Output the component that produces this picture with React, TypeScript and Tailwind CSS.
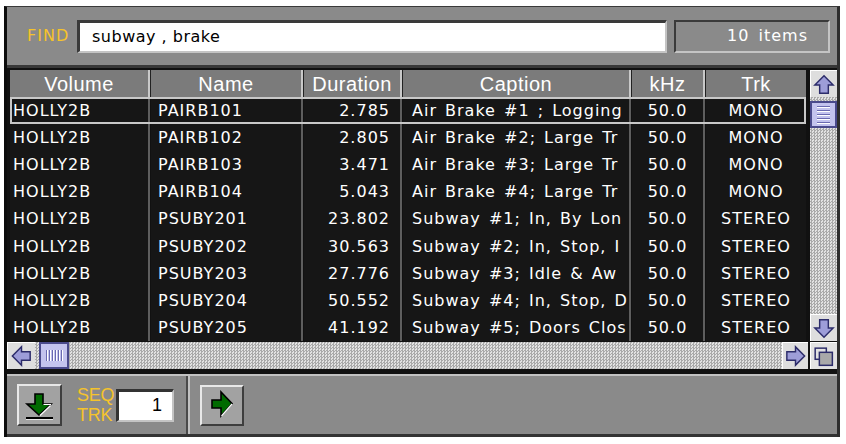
import React from "react";

type Row = [string, string, string, string, string, string];

const rows: Row[] = [
  ["HOLLY2B", "PAIRB101", "2.785", "Air Brake #1 ; Logging", "50.0", "MONO"],
  ["HOLLY2B", "PAIRB102", "2.805", "Air Brake #2; Large Tr", "50.0", "MONO"],
  ["HOLLY2B", "PAIRB103", "3.471", "Air Brake #3; Large Tr", "50.0", "MONO"],
  ["HOLLY2B", "PAIRB104", "5.043", "Air Brake #4; Large Tr", "50.0", "MONO"],
  ["HOLLY2B", "PSUBY201", "23.802", "Subway #1; In, By Lon", "50.0", "STEREO"],
  ["HOLLY2B", "PSUBY202", "30.563", "Subway #2; In, Stop, I", "50.0", "STEREO"],
  ["HOLLY2B", "PSUBY203", "27.776", "Subway #3; Idle & Aw", "50.0", "STEREO"],
  ["HOLLY2B", "PSUBY204", "50.552", "Subway #4; In, Stop, D", "50.0", "STEREO"],
  ["HOLLY2B", "PSUBY205", "41.192", "Subway #5; Doors Clos", "50.0", "STEREO"],
];

const NAVY = "#2c2c6a";
const LAV = "#9d9dd8";

function ArrowUp() {
  return (
    <svg width="27" height="27" viewBox="0 0 27 27">
      <polygon points="13.5,4.5 23,14 18,14 18,22.5 9,22.5 9,14 4,14" fill={LAV} stroke={NAVY} strokeWidth="1.5" />
    </svg>
  );
}

function ArrowDown() {
  return (
    <svg width="27" height="27" viewBox="0 0 27 27">
      <polygon points="13.5,22.5 23,13 18,13 18,4.5 9,4.5 9,13 4,13" fill={LAV} stroke={NAVY} strokeWidth="1.5" />
    </svg>
  );
}

function ArrowLeft() {
  return (
    <svg width="28" height="26" viewBox="0 0 28 26">
      <polygon points="4.5,13 14,3.5 14,8.5 23,8.5 23,17.5 14,17.5 14,22.5" fill={LAV} stroke={NAVY} strokeWidth="1.5" />
    </svg>
  );
}

function ArrowRight() {
  return (
    <svg width="26" height="26" viewBox="0 0 26 26">
      <polygon points="22.5,13 13,3.5 13,8.5 4,8.5 4,17.5 13,17.5 13,22.5" fill={LAV} stroke={NAVY} strokeWidth="1.5" />
    </svg>
  );
}

function GrowBox() {
  return (
    <svg width="28" height="27" viewBox="0 0 28 27">
      <rect x="4.5" y="4.5" width="12" height="12" fill="none" stroke={NAVY} strokeWidth="1.6" />
      <rect x="9" y="9" width="14" height="14" fill="#a9a9a9" stroke={NAVY} strokeWidth="1.6" />
    </svg>
  );
}

function GreenDown() {
  return (
    <svg width="41" height="38" viewBox="0 0 41 38">
      <polygon points="16,8 24,8 24,18 32,18 20,29 8,18 16,18" fill="#006b00" stroke="#000" strokeWidth="1.6" />
      <line x1="24.5" y1="18.5" x2="32" y2="18.5" stroke="#fff" strokeWidth="1" />
      <line x1="31.5" y1="19.5" x2="21" y2="29.5" stroke="#fff" strokeWidth="1.2" />
      <rect x="7" y="31" width="27" height="2" fill="#000" />
      <rect x="7" y="33" width="27" height="1" fill="#e8e8e8" />
    </svg>
  );
}

function GreenRight() {
  return (
    <svg width="40" height="37" viewBox="0 0 40 37">
      <polygon points="10,13 19,13 19,5 30,16.5 19,29 19,21 10,21" fill="#006b00" stroke="#000" strokeWidth="1.6" />
      <line x1="30" y1="17" x2="19.5" y2="29" stroke="#fff" strokeWidth="1.2" />
    </svg>
  );
}

// widths include the 3px column rule on the right
const cols = [
  { w: "w-[141px]", head: "Volume", body: "pl-[3px] justify-start" },
  { w: "w-[153px]", head: "Name", body: "pl-[7px] justify-start" },
  { w: "w-[99px]", head: "Duration", body: "pr-[10px] justify-end" },
  { w: "w-[229px]", head: "Caption", body: "pl-[9px] justify-start" },
  { w: "w-[74px]", head: "kHz", body: "justify-center" },
  { w: "w-[100px]", head: "Trk", body: "justify-center" },
];

const checker =
  "bg-[repeating-conic-gradient(#a9a9a9_0%_25%,#e2e2e2_0%_50%)] bg-[length:3px_3px]";

export default function App() {
  return (
    <div className="w-[846px] h-[444px] bg-white pt-[6px] pl-[4px] font-['DejaVu_Sans',sans-serif] overflow-hidden">
      <div className="w-[836px] h-[431px] border-l-[3px] border-l-[#0c0c0c] border-r-[3px] border-r-[#2e2e2e] border-t border-t-[#3a3a3a] flex flex-col bg-[#8a8a8a]">
        {/* search bar */}
        <div className="h-[58px] flex items-center pl-[20px] shrink-0">
          <span className="text-[16px] text-[#f5c32b] tracking-[1px] w-[50px] leading-none">FIND</span>
          <div className="w-[590px] h-[33px] bg-white border-t-[3px] border-l-[3px] border-[#3a3a3a] border-b-2 border-r-2 border-b-[#c4c4c4] border-r-[#c4c4c4] flex items-center pl-[12px] text-[16px] tracking-[0.5px] text-black">
            subway , brake
          </div>
          <div className="ml-[7px] w-[156px] h-[33px] border-t-2 border-l-2 border-[#3a3a3a] border-b-2 border-r-2 border-b-[#c4c4c4] border-r-[#c4c4c4] flex items-center justify-end pr-[20px] text-[16px] tracking-[1px] [word-spacing:3px] text-white">
            10 items
          </div>
        </div>
        <div className="h-[3px] bg-[#383838] shrink-0" />

        {/* list */}
        <div className="bg-[#111] shrink-0 flex flex-col pt-[2px]">
          <div className="flex h-[271px]">
            <div className="pl-[3px] w-[799px] flex flex-col">
              <div className="flex h-[27px] shrink-0">
                {cols.map((c, i) => (
                  <div key={c.head} className={`${c.w} flex h-full`}>
                    <div
                      className={`flex-1 bg-[#7b7b7b] flex items-center justify-center text-white text-[20px] tracking-[0.5px] font-['Liberation_Sans',sans-serif] leading-none ${i < 5 ? "border-r-2 border-r-[#c9c9c9]" : ""}`}
                    >
                      {c.head}
                    </div>
                    {i < 5 && <div className="w-px bg-[#222]" />}
                  </div>
                ))}
              </div>
              {rows.map((r, ri) => (
                <div key={ri} className="relative flex h-[27.1px] shrink-0">
                  {r.map((v, ci) => (
                    <div key={ci} className={`${cols[ci].w} flex h-full`}>
                      <div
                        className={`flex-1 min-w-0 overflow-hidden whitespace-nowrap flex items-center pt-[1px] ${cols[ci].body} text-white text-[16px] tracking-[1px] [word-spacing:2px] leading-none bg-[#161616] ${ci < 5 ? "border-r-2 border-r-[#5e5e5e]" : ""}`}
                      >
                        {v}
                      </div>
                      {ci < 5 && <div className="w-px bg-[#111]" />}
                    </div>
                  ))}
                  {ri === 0 && (
                    <div className="absolute inset-0 border-2 border-[#c8c8c8] pointer-events-none" />
                  )}
                </div>
              ))}
            </div>

            {/* vertical scroll bar */}
            <div className="ml-[4px] w-[27px] flex flex-col">
              <div className="h-[27px] bg-[#dedede] border-t border-l border-white flex items-center justify-center">
                <ArrowUp />
              </div>
              <div className={`flex-1 flex flex-col pt-[4px] ${checker}`}>
                <div className="h-[27px] bg-[#c3c3ee] border-2 border-[#4a4a8c] flex flex-col items-center justify-center gap-[2px]">
                  {[0, 1, 2, 3, 4].map((k) => (
                    <div key={k} className="w-[13px] h-[2px] bg-[#6a6ab0] border-b border-white" />
                  ))}
                </div>
              </div>
              <div className="h-[27px] bg-[#dedede] border-t border-l border-white flex items-center justify-center">
                <ArrowDown />
              </div>
            </div>
          </div>

          {/* horizontal scroll bar */}
          <div className="flex h-[27px] mt-[1px]">
            <div className="w-[801px] flex">
              <div className="w-[28px] bg-[#dedede] border-t border-l border-white flex items-center justify-center">
                <ArrowLeft />
              </div>
              <div className={`flex-1 flex pl-[4px] ${checker}`}>
                <div className="w-[30px] bg-[#c3c3ee] border-2 border-[#4a4a8c] flex items-center justify-center gap-[1px]">
                  {[0, 1, 2, 3, 4, 5].map((k) => (
                    <div key={k} className="w-[2px] h-[11px] bg-[#6a6ab0] border-r border-white" />
                  ))}
                </div>
              </div>
              <div className="w-[26px] bg-[#dedede] border-t border-l border-white flex items-center justify-center">
                <ArrowRight />
              </div>
            </div>
            <div className="ml-[2px] w-[27px] bg-[#e2e2e2] border-t border-l border-white flex items-center justify-center">
              <GrowBox />
            </div>
          </div>
          <div className="h-[5px]" />
        </div>

        {/* transport panel */}
        <div className="flex-1 border-t-2 border-t-[#c2c2c2] border-b-[3px] border-b-[#333] flex items-stretch">
          <div className="flex items-center pl-[10px] pr-[12px]">
            <div className="w-[45px] h-[42px] bg-[#a2a2a2] border-t-2 border-l-2 border-[#e8e8e8] border-b-2 border-r-2 border-b-[#3e3e3e] border-r-[#3e3e3e] flex items-center justify-center">
              <GreenDown />
            </div>
            <div className="ml-[15px] flex flex-col text-[#f5c32b] text-[18px] leading-[20px] font-['Liberation_Sans',sans-serif] tracking-[-0.3px]">
              <span>SEQ</span>
              <span>TRK</span>
            </div>
            <div className="ml-[2px] w-[58px] h-[33px] bg-white border-t-[3px] border-l-[3px] border-[#333] border-b-2 border-r-2 border-b-[#c4c4c4] border-r-[#c4c4c4] flex items-center justify-end pr-[10px] text-[18px] text-black font-['Liberation_Sans',sans-serif]">
              1
            </div>
          </div>
          <div className="w-[2px] bg-[#4a4a4a]" />
          <div className="w-[2px] bg-[#c2c2c2]" />
          <div className="flex items-center pl-[10px]">
            <div className="w-[44px] h-[41px] bg-[#a2a2a2] border-t-2 border-l-2 border-[#e8e8e8] border-b-2 border-r-2 border-b-[#3e3e3e] border-r-[#3e3e3e] flex items-center justify-center">
              <GreenRight />
            </div>
          </div>
        </div>
      </div>
    </div>
  );
}
